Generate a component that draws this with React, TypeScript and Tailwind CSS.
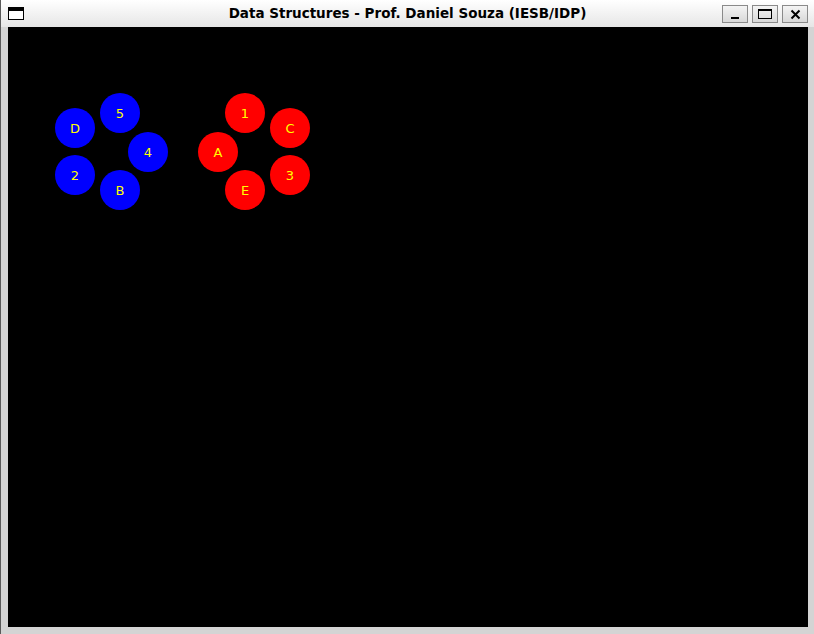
const nodes = [
  { label: 'D', x: 67, y: 101, color: 'blue' },
  { label: '5', x: 112, y: 86, color: 'blue' },
  { label: '4', x: 140, y: 125, color: 'blue' },
  { label: '2', x: 67, y: 148, color: 'blue' },
  { label: 'B', x: 112, y: 163, color: 'blue' },
  { label: 'A', x: 210, y: 125, color: 'red' },
  { label: '1', x: 237, y: 86, color: 'red' },
  { label: 'C', x: 282, y: 101, color: 'red' },
  { label: '3', x: 282, y: 148, color: 'red' },
  { label: 'E', x: 237, y: 163, color: 'red' },
];

function WinButton({ children }: { children: React.ReactNode }) {
  return (
    <div className="w-[26px] h-[18px] border border-[#8a8a8a] bg-gradient-to-b from-[#f4f4f4] to-[#d8d8d8] flex items-center justify-center">
      {children}
    </div>
  );
}

export default function App() {
  return (
    <div className="w-[814px] h-[634px] bg-[#d4d4d4] border-l border-[#5a5a5a] flex flex-col overflow-hidden">
      {/* title bar */}
      <div className="h-[27px] bg-gradient-to-b from-white to-[#e6e6e6] grid grid-cols-[1fr_auto_1fr] items-center">
        <div className="ml-[7px] w-[16px] h-[13px] border border-black bg-white">
          <div className="h-[3px] bg-black" />
        </div>
        <div className="text-center text-[13.5px] font-bold text-black font-['DejaVu_Sans',sans-serif] leading-none">
          Data Structures - Prof. Daniel Souza (IESB/IDP)
        </div>
        <div className="flex justify-end gap-[4px] mr-[6px] mt-[1px]">
          <WinButton>
            <div className="w-[8px] h-[2px] bg-black mt-[7px]" />
          </WinButton>
          <WinButton>
            <div className="w-[14px] h-[10px] border border-black border-t-2" />
          </WinButton>
          <WinButton>
            <svg width="11" height="11" viewBox="0 0 11 11">
              <path d="M1.5 1.5 L9.5 9.5 M9.5 1.5 L1.5 9.5" stroke="black" strokeWidth="2" />
            </svg>
          </WinButton>
        </div>
      </div>
      {/* canvas */}
      <div className="flex pl-[7px]">
        <div className="w-[800px] h-[600px] bg-black relative">
          {nodes.map((n) => (
            <div
              key={n.label}
              className={`absolute w-[40px] h-[40px] rounded-full flex items-center justify-center text-[#ffff00] text-[13px] leading-none font-['DejaVu_Sans',sans-serif] ${
                n.color === 'blue' ? 'bg-[#0000ff]' : 'bg-[#ff0000]'
              }`}
              style={{ left: n.x - 20, top: n.y - 20 }}
            >
              {n.label}
            </div>
          ))}
        </div>
      </div>
    </div>
  );
}
